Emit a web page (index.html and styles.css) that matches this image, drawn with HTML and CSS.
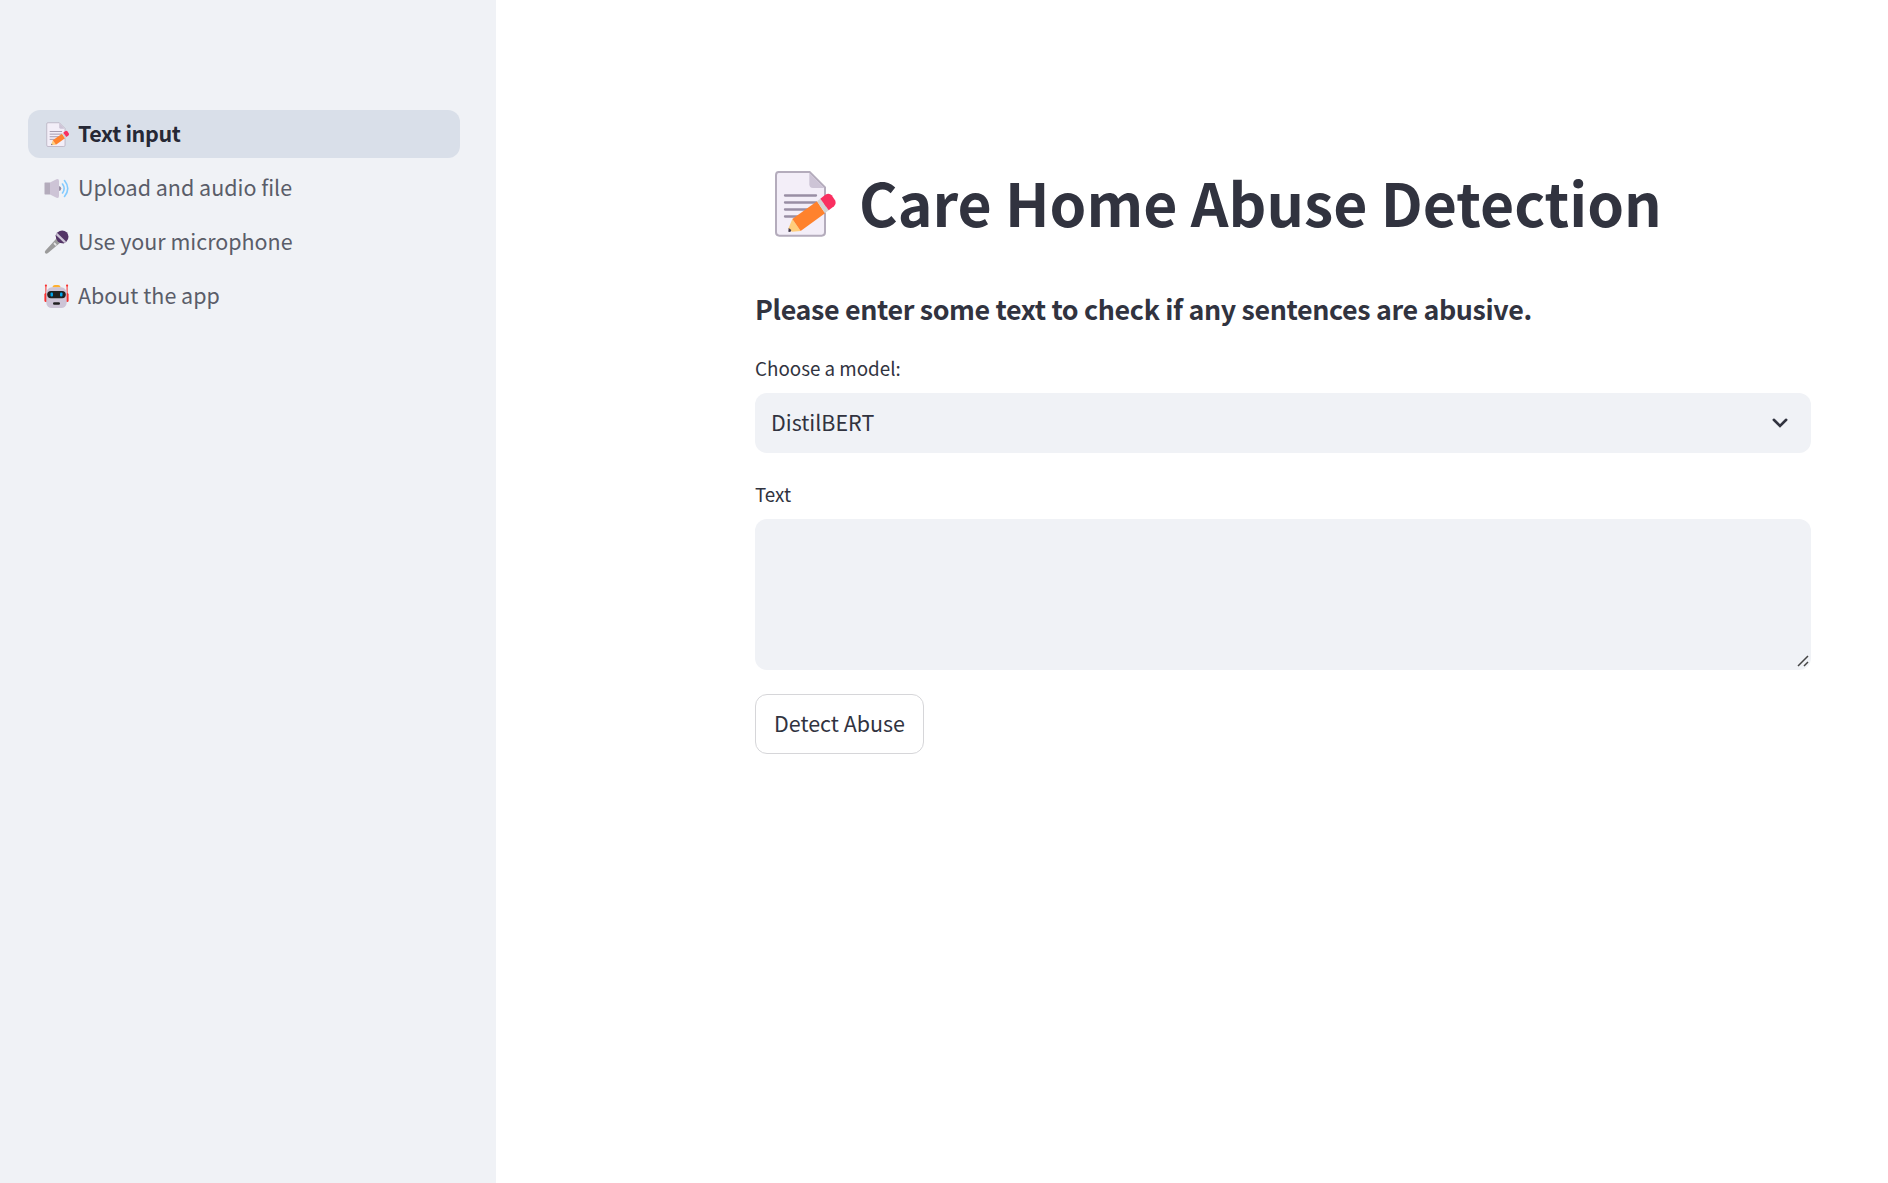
FILE: index.html
```html
<!DOCTYPE html>
<html lang="en">
<head>
<meta charset="utf-8">
<title>Care Home Abuse Detection</title>
<link rel="stylesheet" href="styles.css">
</head>
<body>
<svg class="defs" width="0" height="0" aria-hidden="true">
  <symbol id="memo" viewBox="72 60 189 201">
    <path d="M86 66H179L225 112V247Q225 257 215 257H88Q78 257 78 247V76Q78 66 86 66Z" fill="#f3eef8" stroke="#b4acbc" stroke-width="6"/>
    <path d="M178 69L223 114H189Q178 114 178 103Z" fill="#cdc4d6"/>
    <path d="M105 136.500H198M105 157.500H198M105 178.500H180M105 199.500H150" stroke="#998ea4" stroke-width="7" stroke-linecap="round"/>
    <path d="M127 207L115 236L126 245L152 243Z" fill="#ffce7c"/>
    <path d="M116 234L124 240L121 246L115 245Z" fill="#433b4b"/>
    <path d="M127 207L201 154L225 190L152 243Z" fill="#ff822d"/>
    <path d="M201 154L211 146L236 181L225 190Z" fill="#d3d3d3"/>
    <path d="M211 146L225 135Q237 127 245 136L255 151Q260 161 252 169L236 181Z" fill="#f92f60"/>
  </symbol>
</svg>
<div class="app">
  <nav class="sidebar">
    <a class="nav-item active"><svg class="nav-icon"><use href="#memo" x="2" y="0" width="23.500" height="25"/></svg><span>Text input</span></a>
    <a class="nav-item"><svg class="nav-icon" viewBox="0 0 25 25">
      <path d="M1 6.500H6V18.500H1Q.5 18.500 .5 17.500V7.500Q.5 6.500 1 6.500Z" fill="#b4acbc"/>
      <path d="M6 6.500L12.500 3.200Q15 2.500 15 5V20Q15 22.500 12.500 21.800L6 18.500Z" fill="#cdc4d6"/>
      <path d="M15 10Q17.300 10.500 17.300 12.500T15 15Z" fill="#998ea4"/>
      <path d="M18.500 8Q21.800 12.500 18.500 17M20.500 4.500Q27 12.500 20.500 20.500" fill="none" stroke="#83cbff" stroke-width="1.600" stroke-linecap="round"/>
    </svg><span>Upload and audio file</span></a>
    <a class="nav-item"><svg class="nav-icon" viewBox="0 0 25 25">
      <path d="M12.200 8.700L16.200 12.700L4 23Q2.500 24.300 1.300 23.300T1.500 20.500Z" fill="#9b9b9b"/>
      <circle cx="18.200" cy="6.800" r="6.300" fill="#533566"/>
      <path d="M13 3.500L21.500 12L19.800 13.500Q16 13.500 14 11T11.500 5.200Z" fill="#533566"/>
      <path d="M13.200 3L22 11.500L20.300 13L11.900 5Z" fill="#cdc4d6"/>
      <path d="M10.500 13.500L11.800 14.800" stroke="#e6e6e6" stroke-width="1.800" stroke-linecap="round"/>
    </svg><span>Use your microphone</span></a>
    <a class="nav-item"><svg class="nav-icon" viewBox="0 0 25 25">
      <path d="M1.900 1.500V10M23.100 1.500V10" stroke="#f8312f" stroke-width="1"/>
      <rect x=".9" y=".5" width="2" height="2" rx=".7" fill="#f8312f"/><rect x="22.100" y=".5" width="2" height="2" rx=".7" fill="#f8312f"/>
      <rect x=".4" y="9" width="3" height="9" rx="1.500" fill="#f8312f"/><rect x="21.600" y="9" width="3" height="9" rx="1.500" fill="#f8312f"/>
      <path d="M8.500 3.500Q8.500 1 11 1H14Q16.500 1 16.500 3.500Z" fill="#ffb02e"/>
      <rect x="2.300" y="3.300" width="20.400" height="20.700" rx="5.500" fill="#cdc4d6"/>
      <rect x="3.200" y="7" width="18.600" height="7.200" rx="3.600" fill="#212121"/>
      <rect x="6.500" y="8.600" width="2.500" height="4" rx="1" fill="#00a6ed"/><rect x="16" y="8.600" width="2.500" height="4" rx="1" fill="#00a6ed"/>
      <rect x="9" y="18.300" width="7" height="2.500" rx="1.200" fill="#212121"/>
    </svg><span>About the app</span></a>
  </nav>
  <main class="main">
    <h1 class="title"><svg class="title-icon"><use href="#memo"/></svg><span>Care Home Abuse Detection</span></h1>
    <h4 class="subtitle">Please enter some text to check if any sentences are abusive.</h4>
    <div class="field">
      <div class="label">Choose a model:</div>
      <div class="select"><span>DistilBERT</span><svg class="chevron" viewBox="0 0 16 10"><path d="M1.800 1.800L8 7.900L14.200 1.800" fill="none" stroke="#31333f" stroke-width="2.600" stroke-linecap="round"/></svg></div>
    </div>
    <div class="field">
      <div class="label">Text</div>
      <div class="textarea"><svg class="grip" viewBox="0 0 12 12"><path d="M1 11L11 1M7 11L11 7" stroke="#444" stroke-width="1.500"/></svg></div>
    </div>
    <button class="button">Detect Abuse</button>
  </main>
</div>
</body>
</html>
```
FILE: styles.css
```css
* { box-sizing: border-box; }
body {
  margin: 0;
  background: #fff;
  color: #31333f;
  font-family: "Noto Sans CJK SC", "Noto Sans", sans-serif;
  font-size: 21.480px;
  overflow: hidden;
}
.defs { display: block; }
.app { display: flex; height: 1183px; }
.sidebar {
  flex: none;
  width: 496px;
  padding: 110px 36px 0 28px;
  background: #f0f2f6;
  display: flex;
  flex-direction: column;
  gap: 6px;
}
.nav-item {
  display: flex;
  align-items: center;
  height: 48px;
  padding-left: 16px;
  border-radius: 12px;
  color: #5a5d69;
  white-space: nowrap;
}
.nav-icon { flex: none; width: 25px; height: 25px; margin-right: 9px; }
.nav-item span { padding-bottom: 3px; }
.nav-item.active {
  background: #d9dfe9;
  color: #262835;
  font-weight: 600;
  letter-spacing: -0.340px;
}
.main { width: 1315px; padding: 162px 0 0 259px; }
.title {
  display: flex;
  align-items: center;
  height: 80px;
  margin: 0;
  font-size: 58.900px;
  font-weight: 700;
  line-height: 80px;
  white-space: nowrap;
}
.title-icon { flex: none; width: 63px; height: 67px; margin: 3px 22px 0 19px; }
.subtitle {
  margin: 49px 0 26px;
  font-size: 26.850px;
  font-weight: 600;
  line-height: 36px;
  letter-spacing: -0.360px;
  white-space: nowrap;
}
.field { margin-bottom: 26px; }
.label { height: 40px; font-size: 18.800px; line-height: 30px; }
.select {
  display: flex;
  align-items: center;
  justify-content: space-between;
  height: 60px;
  padding: 0 23px 0 16px;
  border-radius: 12px;
  background: #f0f2f6;
}
.select span { padding-bottom: 3px; }
.chevron { width: 16px; height: 10px; }
.textarea {
  display: flex;
  align-items: flex-end;
  justify-content: flex-end;
  height: 151px;
  padding: 0 2px 3px;
  border-radius: 12px;
  background: #f0f2f6;
}
.grip { width: 12px; height: 12px; }
.button {
  display: block;
  width: 169px;
  height: 60px;
  margin-top: -2px;
  padding: 0 0 3px;
  border: 1px solid #d6d6d9;
  border-radius: 12px;
  background: #fff;
  color: inherit;
  font: inherit;
  white-space: nowrap;
}
```
